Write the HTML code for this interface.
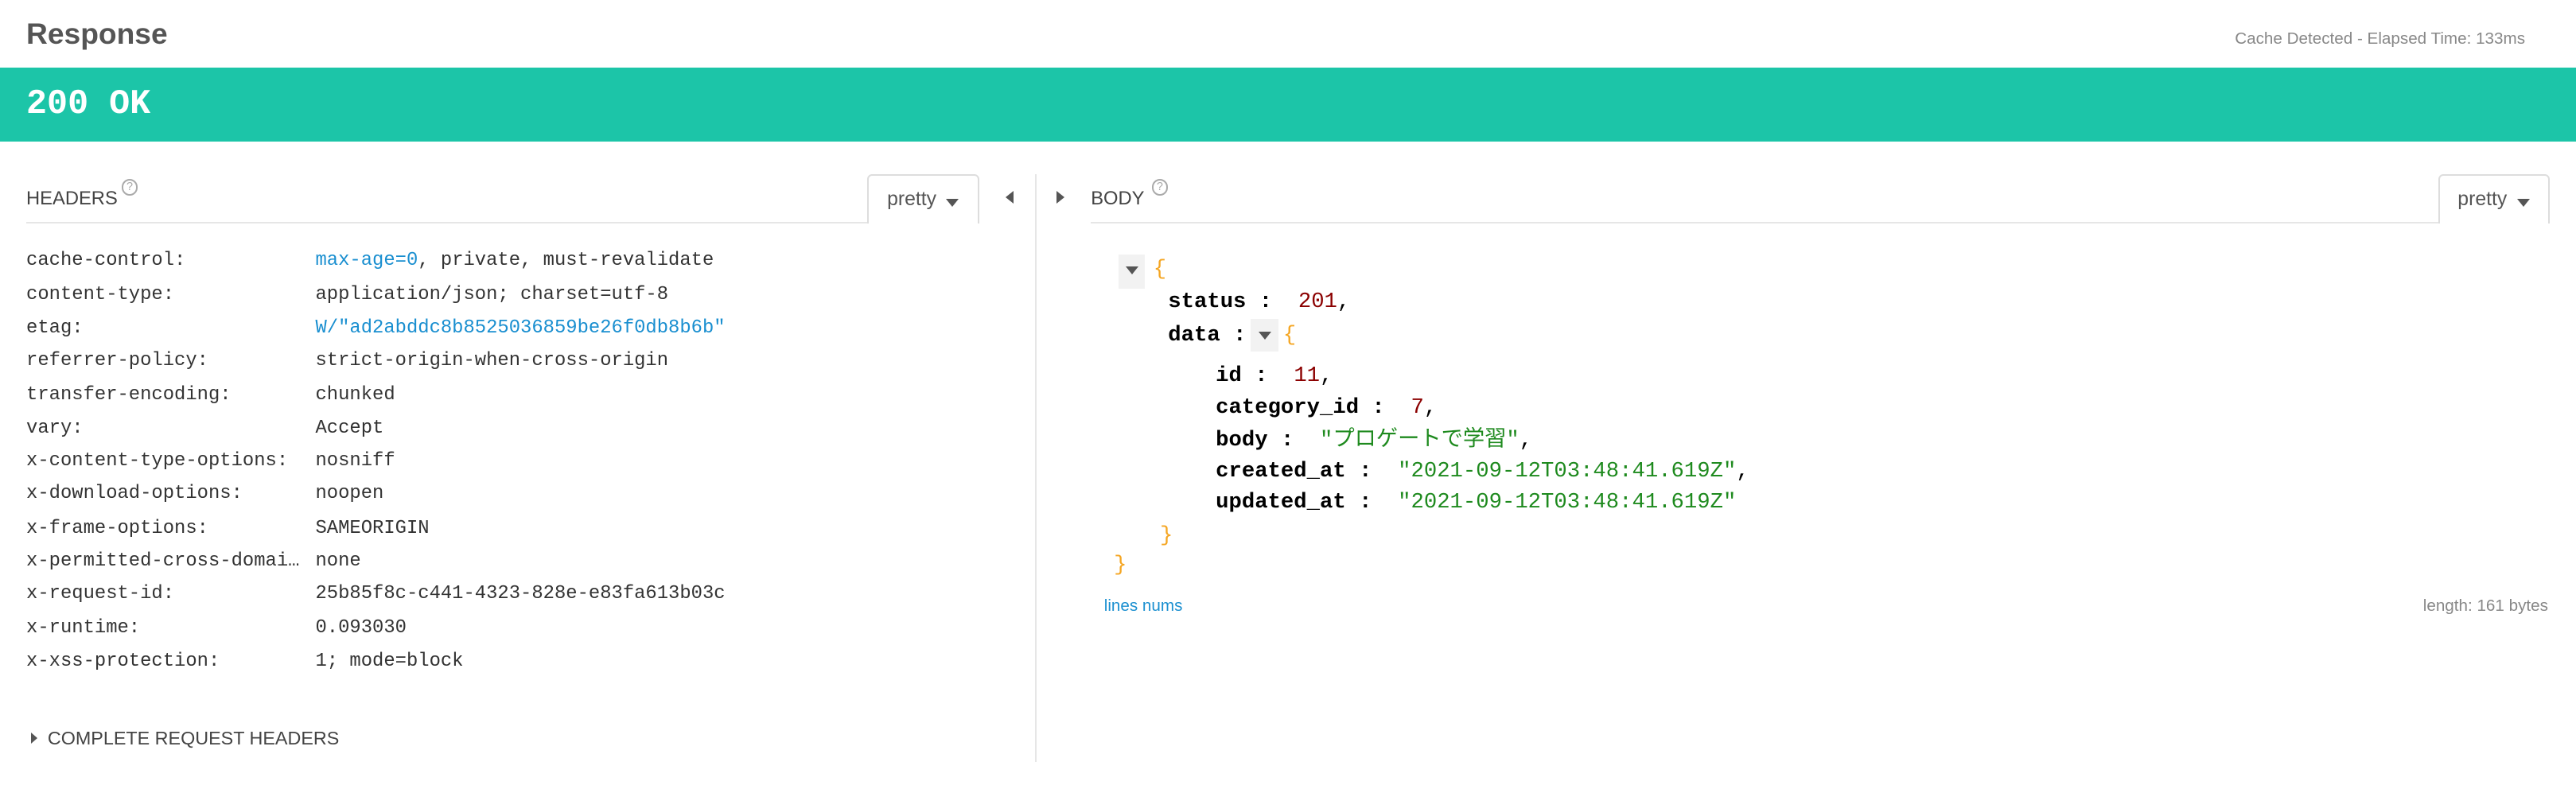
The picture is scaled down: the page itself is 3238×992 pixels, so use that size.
<!DOCTYPE html>
<html><head><meta charset="utf-8"><style>
html,body{margin:0;padding:0;background:#fff;overflow:hidden}
body{width:1568px;height:480.4px;zoom:2.0651;position:relative;font-family:"Liberation Sans","Noto Sans CJK JP",sans-serif}
.a{position:absolute;white-space:pre}
.m{font-family:"Liberation Mono","Noto Sans CJK JP",monospace;font-size:11.55px;color:#333;line-height:14px}
.j{font-family:"Liberation Mono","Noto Sans CJK JP",monospace;font-size:13.2px;line-height:16px;color:#000}
.k{font-weight:bold}
.n{color:#8b0000}.s{color:#1e8a1e}.b{color:#f5a623}.bl{color:#1a8fd0}
.tri{width:0;height:0;position:absolute}
.btn{position:absolute;border:1px solid #ddd;border-bottom:none;border-radius:3px 3px 0 0;background:#fff;font-size:12px;color:#555}
.q{position:absolute;width:8px;height:8px;border:1px solid #aaa;border-radius:50%;font-size:7px;line-height:8px;text-align:center;color:#aaa}
</style></head><body>
<div class="a" style="left:16px;top:10px;font-size:18px;font-weight:bold;color:#555">Response</div>
<div class="a" style="right:31px;top:18px;font-size:10px;color:#888">Cache Detected - Elapsed Time: 133ms</div>
<div class="a" style="left:0;top:41px;width:1568px;height:45px;background:#1cc5a8"></div>
<div class="a" style="left:16px;top:52px;font-family:'Liberation Mono',monospace;font-weight:bold;font-size:21px;color:#fff">200 OK</div>

<div class="a" style="left:16px;top:115px;font-size:11.5px;color:#444">HEADERS</div>
<div class="q" style="left:74px;top:109px">?</div>
<div class="a" style="left:16px;top:135px;width:579px;height:1px;background:#e6e6e6"></div>
<div class="btn" style="left:528px;top:106px;width:66px;height:29px"><span style="position:absolute;left:11px;top:8px">pretty</span><span class="tri" style="left:47px;top:14px;border-left:4px solid transparent;border-right:4px solid transparent;border-top:5px solid #555"></span></div>

<div class="tri" style="left:612px;top:116px;border-top:4px solid transparent;border-bottom:4px solid transparent;border-right:5px solid #555"></div>
<div class="a" style="left:630px;top:106px;width:1px;height:358px;background:#e6e6e6"></div>
<div class="tri" style="left:643px;top:116px;border-top:4px solid transparent;border-bottom:4px solid transparent;border-left:5px solid #555"></div>

<div class="a" style="left:664px;top:115px;font-size:11.5px;color:#444">BODY</div>
<div class="q" style="left:701px;top:109px">?</div>
<div class="a" style="left:664px;top:135px;width:887px;height:1px;background:#e6e6e6"></div>
<div class="btn" style="left:1484px;top:106px;width:66px;height:29px"><span style="position:absolute;left:11px;top:8px">pretty</span><span class="tri" style="left:47px;top:14px;border-left:4px solid transparent;border-right:4px solid transparent;border-top:5px solid #555"></span></div>

<div class="a m" style="left:16px;top:152px">cache-control:</div><div class="a m" style="left:192px;top:152px"><span class="bl">max-age=0</span>, private, must-revalidate</div>
<div class="a m" style="left:16px;top:173px">content-type:</div><div class="a m" style="left:192px;top:173px">application/json; charset=utf-8</div>
<div class="a m" style="left:16px;top:193px">etag:</div><div class="a m" style="left:192px;top:193px;color:#1a8fd0">W/"ad2abddc8b8525036859be26f0db8b6b"</div>
<div class="a m" style="left:16px;top:213px">referrer-policy:</div><div class="a m" style="left:192px;top:213px">strict-origin-when-cross-origin</div>
<div class="a m" style="left:16px;top:234px">transfer-encoding:</div><div class="a m" style="left:192px;top:234px">chunked</div>
<div class="a m" style="left:16px;top:254px">vary:</div><div class="a m" style="left:192px;top:254px">Accept</div>
<div class="a m" style="left:16px;top:274px">x-content-type-options:</div><div class="a m" style="left:192px;top:274px">nosniff</div>
<div class="a m" style="left:16px;top:294px">x-download-options:</div><div class="a m" style="left:192px;top:294px">noopen</div>
<div class="a m" style="left:16px;top:315px">x-frame-options:</div><div class="a m" style="left:192px;top:315px">SAMEORIGIN</div>
<div class="a m" style="left:16px;top:335px">x-permitted-cross-domai…</div><div class="a m" style="left:192px;top:335px">none</div>
<div class="a m" style="left:16px;top:355px">x-request-id:</div><div class="a m" style="left:192px;top:355px">25b85f8c-c441-4323-828e-e83fa613b03c</div>
<div class="a m" style="left:16px;top:376px">x-runtime:</div><div class="a m" style="left:192px;top:376px">0.093030</div>
<div class="a m" style="left:16px;top:396px">x-xss-protection:</div><div class="a m" style="left:192px;top:396px">1; mode=block</div>

<div class="tri" style="left:19px;top:446px;border-top:3.5px solid transparent;border-bottom:3.5px solid transparent;border-left:4px solid #555"></div>
<div class="a" style="left:29px;top:443px;font-size:11.3px;color:#444">COMPLETE REQUEST HEADERS</div>

<div class="a" style="left:681px;top:155px;width:16px;height:21px;background:#f2f2f2"></div>
<div class="tri" style="left:685px;top:162px;border-left:4px solid transparent;border-right:4px solid transparent;border-top:5px solid #555"></div>
<div class="a j b" style="left:702px;top:156px">{</div>
<div class="a j" style="left:711px;top:176px"><span class="k">status</span> <b>:</b>  <span class="n">201</span>,</div>
<div class="a j" style="left:711px;top:196px"><span class="k">data</span> <b>:</b></div>
<div class="a" style="left:761px;top:194px;width:17px;height:20px;background:#f2f2f2"></div>
<div class="tri" style="left:766px;top:202px;border-left:4px solid transparent;border-right:4px solid transparent;border-top:5px solid #555"></div>
<div class="a j b" style="left:781px;top:196px">{</div>
<div class="a j" style="left:740px;top:221px"><span class="k">id</span> <b>:</b>  <span class="n">11</span>,</div>
<div class="a j" style="left:740px;top:240px"><span class="k">category_id</span> <b>:</b>  <span class="n">7</span>,</div>
<div class="a j" style="left:740px;top:260px"><span class="k">body</span> <b>:</b>  <span class="s">"プロゲートで学習"</span>,</div>
<div class="a j" style="left:740px;top:279px"><span class="k">created_at</span> <b>:</b>  <span class="s">"2021-09-12T03:48:41.619Z"</span>,</div>
<div class="a j" style="left:740px;top:298px"><span class="k">updated_at</span> <b>:</b>  <span class="s">"2021-09-12T03:48:41.619Z"</span></div>
<div class="a j b" style="left:706px;top:318px">}</div>
<div class="a j b" style="left:678px;top:336px">}</div>
<div class="a" style="left:672px;top:363px;font-size:10px;color:#1a8fd0">lines nums</div>
<div class="a" style="right:17px;top:363px;font-size:10px;color:#888">length: 161 bytes</div>
</body></html>
